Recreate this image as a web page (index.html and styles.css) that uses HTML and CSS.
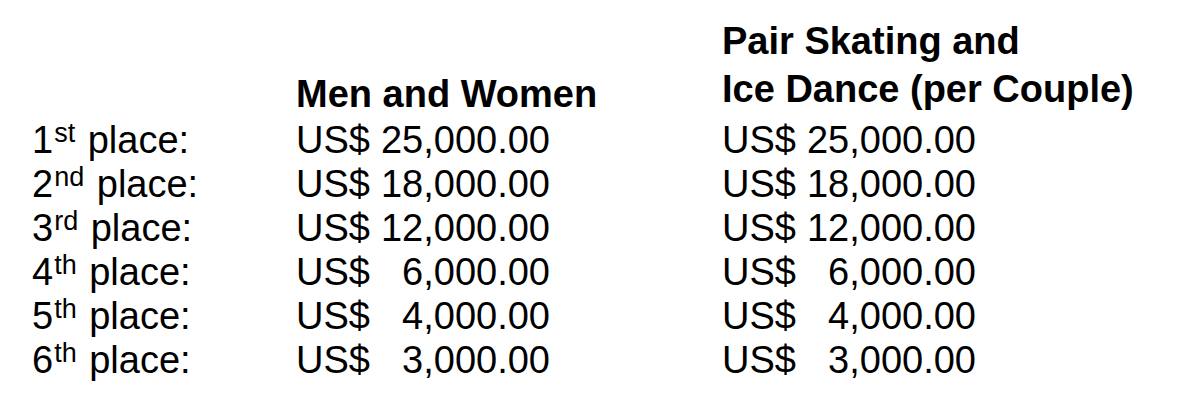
FILE: index.html
```html
<!DOCTYPE html>
<html lang="en">
<head>
<meta charset="utf-8">
<title>Prize Money</title>
<link rel="stylesheet" href="styles.css">
</head>
<body>
<div class="prizes">
  <div class="row head">
    <div class="label"></div>
    <div class="h h-single">Men and Women</div>
    <div class="h h-double">Pair Skating and<br>Ice Dance (per Couple)</div>
  </div>
  <div class="row">
    <div class="label">1<sup>st</sup> place:</div>
    <div class="amt"><span class="cur">US$</span><span class="num">25,000.00</span></div>
    <div class="amt"><span class="cur">US$</span><span class="num">25,000.00</span></div>
  </div>
  <div class="row">
    <div class="label">2<sup>nd</sup> place:</div>
    <div class="amt"><span class="cur">US$</span><span class="num">18,000.00</span></div>
    <div class="amt"><span class="cur">US$</span><span class="num">18,000.00</span></div>
  </div>
  <div class="row">
    <div class="label">3<sup>rd</sup> place:</div>
    <div class="amt"><span class="cur">US$</span><span class="num">12,000.00</span></div>
    <div class="amt"><span class="cur">US$</span><span class="num">12,000.00</span></div>
  </div>
  <div class="row">
    <div class="label">4<sup>th</sup> place:</div>
    <div class="amt"><span class="cur">US$</span><span class="num">6,000.00</span></div>
    <div class="amt"><span class="cur">US$</span><span class="num">6,000.00</span></div>
  </div>
  <div class="row">
    <div class="label">5<sup>th</sup> place:</div>
    <div class="amt"><span class="cur">US$</span><span class="num">4,000.00</span></div>
    <div class="amt"><span class="cur">US$</span><span class="num">4,000.00</span></div>
  </div>
  <div class="row">
    <div class="label">6<sup>th</sup> place:</div>
    <div class="amt"><span class="cur">US$</span><span class="num">3,000.00</span></div>
    <div class="amt"><span class="cur">US$</span><span class="num">3,000.00</span></div>
  </div>
</div>
</body>
</html>
```

FILE: styles.css
```css
html, body {
  margin: 0;
  background: #ffffff;
}

body {
  font-family: "Liberation Sans", Arial, sans-serif;
  font-size: 38px;
  line-height: 44px;
  color: #000000;
}

.prizes {
  padding: 17px 0 0 32px;
  display: flex;
  flex-direction: column;
}

.row {
  display: grid;
  grid-template-columns: 264px 426px auto;
  align-items: end;
}

.head {
  margin-bottom: 5px;
}

.h {
  font-weight: bold;
  white-space: nowrap;
}

.h-single {
  margin-bottom: -3px;
}

.h-double {
  line-height: 48px;
}

.label {
  white-space: nowrap;
}

.label sup {
  font-size: 27px;
  line-height: 0;
  vertical-align: 11px;
  margin-left: 1px;
  margin-right: 2px;
}

.amt {
  display: grid;
  grid-template-columns: 84px 170px;
  white-space: nowrap;
}

.num {
  text-align: right;
}
```
